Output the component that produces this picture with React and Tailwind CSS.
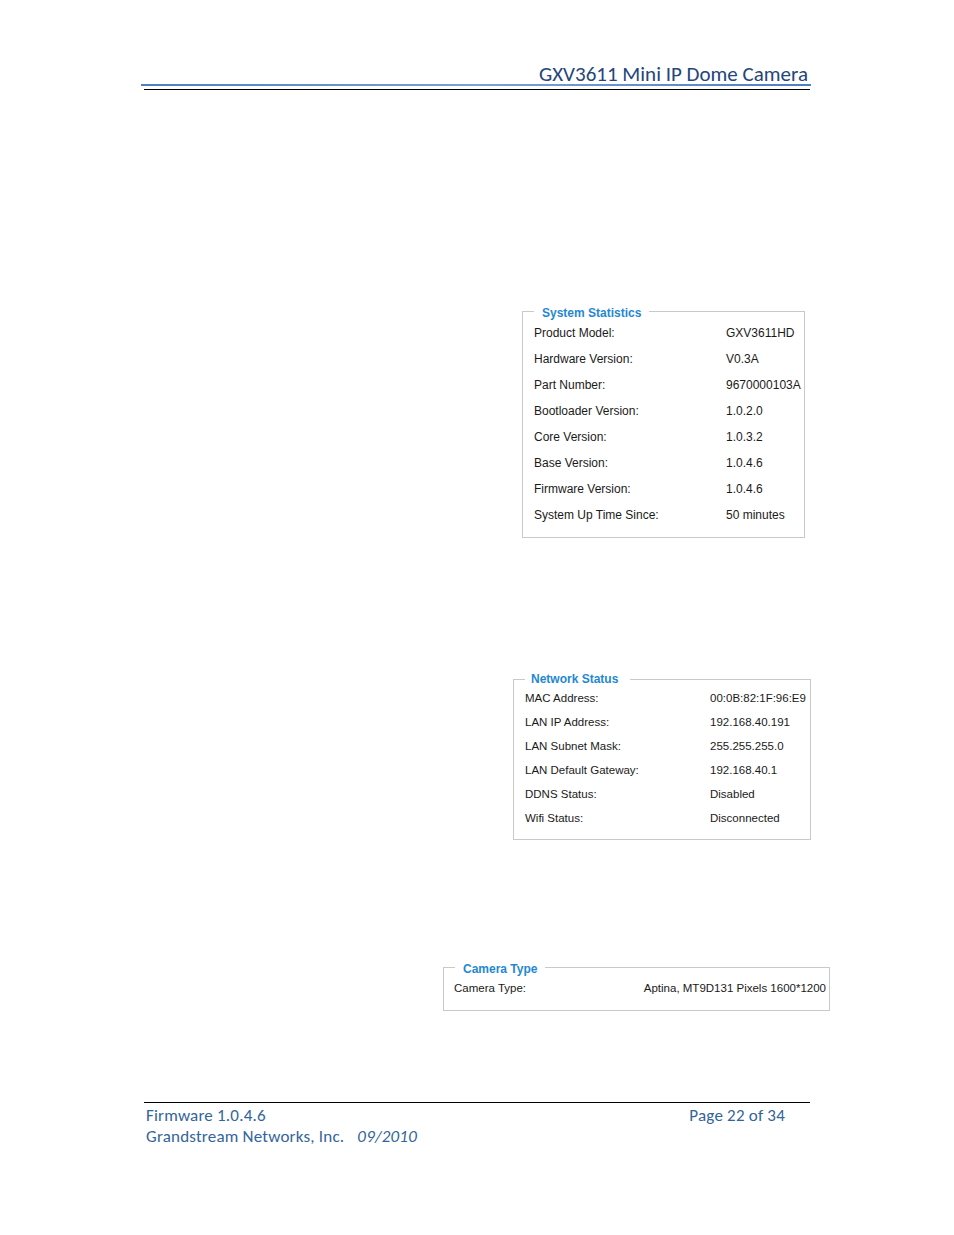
export default function App() {
  const sys = [
    ["Product Model:", "GXV3611HD"],
    ["Hardware Version:", "V0.3A"],
    ["Part Number:", "9670000103A"],
    ["Bootloader Version:", "1.0.2.0"],
    ["Core Version:", "1.0.3.2"],
    ["Base Version:", "1.0.4.6"],
    ["Firmware Version:", "1.0.4.6"],
    ["System Up Time Since:", "50 minutes"],
  ];
  const net = [
    ["MAC Address:", "00:0B:82:1F:96:E9"],
    ["LAN IP Address:", "192.168.40.191"],
    ["LAN Subnet Mask:", "255.255.255.0"],
    ["LAN Default Gateway:", "192.168.40.1"],
    ["DDNS Status:", "Disabled"],
    ["Wifi Status:", "Disconnected"],
  ];
  const arial = { fontFamily: "'Liberation Sans', Arial, sans-serif" };
  const cal = { fontFamily: "Carlito, 'Open Sans', sans-serif" };
  return (
    <div className="w-[954px] h-[1235px] bg-white overflow-hidden flex flex-col">
      {/* Header */}
      <div className="ml-[141px] w-[670px] pt-[64px]">
        <div
          className="h-[21px] leading-[21px] text-right pr-[3px] text-[21px] text-[#24467a] whitespace-nowrap"
          style={cal}
        >
          GXV3611 Mini IP Dome Camera
        </div>
        <div className="-mt-px h-[2px] bg-gradient-to-r from-[#4f7fc0] via-[#7aa3d6] to-[#4f7fc0]" />
        <div className="ml-[3px] mt-[3px] w-[666px] h-px bg-black" />
      </div>

      {/* System Statistics */}
      <fieldset
        className="mt-[212px] ml-[522px] w-[283px] border border-[#c9c9c9] pl-[11px] pb-[9px]"
        style={arial}
      >
        <legend className="px-[8px] pt-[4px] leading-[14px] text-[12px] font-bold text-[#1f88d2]">
          System Statistics
        </legend>
        {sys.map(([k, v]) => (
          <div key={k} className="flex h-[26px] leading-[26px] text-[12px] text-[#1a1a1a] whitespace-nowrap">
            <span className="w-[192px] shrink-0">{k}</span>
            <span>{v}</span>
          </div>
        ))}
      </fieldset>

      {/* Network Status */}
      <fieldset
        className="mt-[134px] ml-[513px] w-[298px] border border-[#c9c9c9] pl-[11px] pb-[9px]"
        style={arial}
      >
        <legend className="pl-[6px] pr-[12px] leading-[14px] text-[12px] font-bold text-[#1f88d2]">
          Network Status
        </legend>
        {net.map(([k, v]) => (
          <div key={k} className="flex h-[24px] leading-[24px] text-[11.5px] text-[#1a1a1a] whitespace-nowrap">
            <span className="w-[185px] shrink-0">{k}</span>
            <span>{v}</span>
          </div>
        ))}
      </fieldset>

      {/* Camera Type */}
      <fieldset
        className="mt-[118px] ml-[443px] w-[387px] border border-[#c9c9c9] pl-[10px] pr-[3px] pt-[2px] pb-[12px]"
        style={arial}
      >
        <legend className="ml-[1px] px-[8px] pt-[4px] leading-[14px] text-[12px] font-bold text-[#1f88d2]">
          Camera Type
        </legend>
        <div className="flex justify-between h-[20px] leading-[20px] text-[11.5px] text-[#1a1a1a] whitespace-nowrap">
          <span>Camera Type:</span>
          <span>Aptina, MT9D131 Pixels 1600*1200</span>
        </div>
      </fieldset>

      {/* Footer */}
      <div className="mt-[91px] ml-[144px] w-[666px] h-px bg-black" />
      <div className="ml-[146px] w-[639px] pt-[2px] text-[17px] tracking-[0.2px] text-[#33649a]" style={cal}>
        <div className="flex justify-between h-[21px] leading-[21px] whitespace-nowrap">
          <span>Firmware 1.0.4.6</span>
          <span>Page 22 of 34</span>
        </div>
        <div className="flex h-[21px] leading-[21px] whitespace-nowrap">
          <span>Grandstream Networks, Inc.</span>
          <span className="ml-[13px] italic">09/2010</span>
        </div>
      </div>
    </div>
  );
}
